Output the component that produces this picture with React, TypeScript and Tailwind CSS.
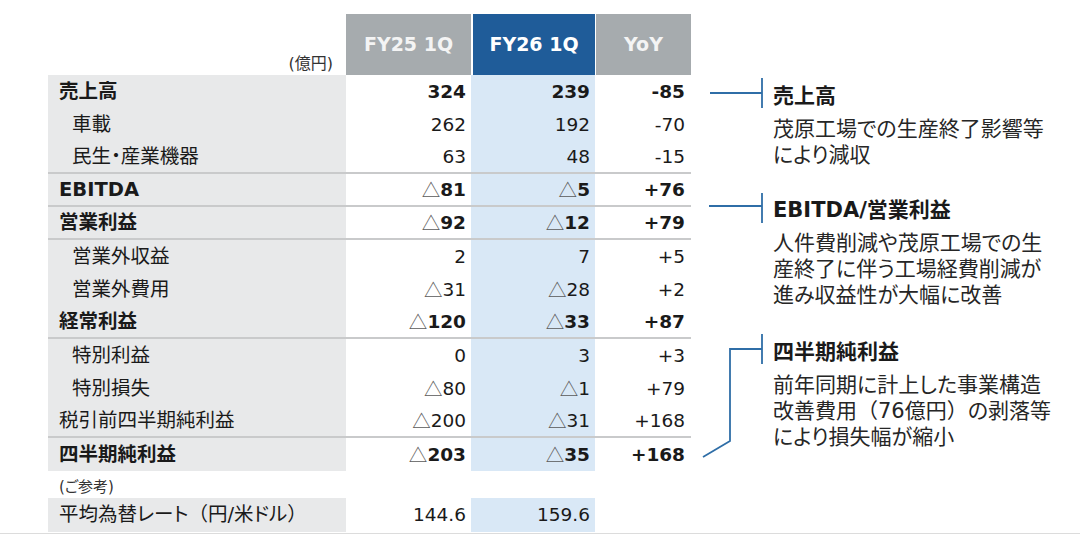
import React from "react";

type Row = {
  label: string;
  fy25: string;
  fy26: string;
  yoy: string;
  bold?: boolean;
  indent?: boolean;
  line?: boolean;
};

const rows: Row[] = [
  { label: "売上高", fy25: "324", fy26: "239", yoy: "-85", bold: true },
  { label: "車載", fy25: "262", fy26: "192", yoy: "-70", indent: true },
  { label: "民生・産業機器", fy25: "63", fy26: "48", yoy: "-15", indent: true, line: true },
  { label: "EBITDA", fy25: "△81", fy26: "△5", yoy: "+76", bold: true, line: true },
  { label: "営業利益", fy25: "△92", fy26: "△12", yoy: "+79", bold: true, line: true },
  { label: "営業外収益", fy25: "2", fy26: "7", yoy: "+5", indent: true },
  { label: "営業外費用", fy25: "△31", fy26: "△28", yoy: "+2", indent: true },
  { label: "経常利益", fy25: "△120", fy26: "△33", yoy: "+87", bold: true, line: true },
  { label: "特別利益", fy25: "0", fy26: "3", yoy: "+3", indent: true },
  { label: "特別損失", fy25: "△80", fy26: "△1", yoy: "+79", indent: true },
  { label: "税引前四半期純利益", fy25: "△200", fy26: "△31", yoy: "+168", line: true },
  { label: "四半期純利益", fy25: "△203", fy26: "△35", yoy: "+168", bold: true },
];

const latin = "font-['DejaVu_Sans','Noto_Sans_CJK_JP',sans-serif]";

// full-width bracket without proportional spacing
const Paren = ({ c }: { c: string }) => <span className="[font-feature-settings:normal]">{c}</span>;

// △ is drawn thin and grey even on bold rows
const Num = ({ value }: { value: string }) => {
  if (!value.startsWith("△")) return <>{value}</>;
  return (
    <>
      <span className="font-normal text-[#5a5a5a] font-['Noto_Sans_CJK_JP',sans-serif]">△</span>
      {value.slice(1)}
    </>
  );
};

const Note = ({ title, lines, className }: { title: string; lines: React.ReactNode[]; className: string }) => (
  <div className={className}>
    <div className="text-[21px] leading-[30px] font-bold text-[#1a1a1a]">{title}</div>
    <div className="mt-[5px] text-[21px] leading-[26px] text-[#262626]">
      {lines.map((l, i) => (
        <div key={i}>{l}</div>
      ))}
    </div>
  </div>
);

export default function App() {
  return (
    <div
      className={`relative w-[1080px] h-[543px] overflow-hidden bg-white text-[#1a1a1a] ${latin} [font-feature-settings:'palt']`}
    >
      <div className="flex h-[534px] border-b border-[#dcdcdc]">
        {/* table */}
        <div className="ml-[48px] pt-[14px] w-[643px]">
          <div className="grid grid-cols-[298px_125px_124px_96px] h-[61px]">
            <div className="flex items-end justify-end pr-[13px] pb-[1px] text-[16px] leading-[20px] text-[#333]">
              (億円)
            </div>
            <div className="flex items-center justify-center bg-[#a6abae] text-[19px] font-bold text-[#f4f4f4]">
              FY25 1Q
            </div>
            <div className="flex items-center justify-center bg-[#1f5c99] border-l-2 border-white text-[19px] font-bold text-white">
              FY26 1Q
            </div>
            <div className="flex items-center justify-center bg-[#a6abae] border-l border-white text-[19px] font-bold text-[#f4f4f4]">
              YoY
            </div>
          </div>

          {rows.map((r) => (
            <div
              key={r.label}
              className={`grid grid-cols-[298px_125px_124px_96px] h-[33px] box-border ${
                r.line ? "border-b-2 border-[#c9cacb]" : ""
              } ${r.bold ? "font-bold" : ""}`}
            >
              <div
                className={`flex items-center bg-[#e8e9ea] text-[19.5px] ${
                  r.indent ? "pl-[24px]" : "pl-[11px]"
                }`}
              >
                {r.label}
              </div>
              <div className="flex items-center justify-end pr-[5px] text-[18.5px]">
                <Num value={r.fy25} />
              </div>
              <div className="flex items-center justify-end pr-[5px] bg-[#d9e8f6] text-[18.5px]">
                <Num value={r.fy26} />
              </div>
              <div className="flex items-center justify-end pr-[6px] text-[18.5px]">
                <Num value={r.yoy} />
              </div>
            </div>
          ))}

          <div className="h-[27px] flex items-end pl-[11px] pb-[1px] text-[15px] leading-[20px] text-[#333]">
            (ご参考)
          </div>
          <div className="grid grid-cols-[298px_125px_124px_96px] h-[34px]">
            <div className="flex items-center pl-[11px] bg-[#e8e9ea] text-[19.5px]">
              平均為替レート<Paren c="（" />円/米ドル<Paren c="）" />
            </div>
            <div className="flex items-center justify-end pr-[5px] text-[18.5px]">144.6</div>
            <div className="flex items-center justify-end pr-[5px] bg-[#d9e8f6] text-[18.5px]">159.6</div>
            <div />
          </div>
        </div>

        {/* notes */}
        <div className="ml-[82px] flex flex-col">
          <Note className="mt-[81px]" title="売上高" lines={["茂原工場での生産終了影響等", "により減収"]} />
          <Note
            className="mt-[27px]"
            title="EBITDA/営業利益"
            lines={["人件費削減や茂原工場での生", "産終了に伴う工場経費削減が", "進み収益性が大幅に改善"]}
          />
          <Note
            className="mt-[29px]"
            title="四半期純利益"
            lines={[
              "前年同期に計上した事業構造",
              <>
                改善費用<Paren c="（" />76億円<Paren c="）" />の剥落等
              </>,
              "により損失幅が縮小",
            ]}
          />
        </div>
      </div>

      <svg className="absolute inset-0 pointer-events-none" width="1080" height="543" fill="none">
        <g stroke="#2f6ea7" strokeWidth="1.8">
          <path d="M710 93H762M762 78V108" />
          <path d="M709 206H762M762 193V223" />
          <path d="M762 334V364M762 349H730V441L703 457" />
        </g>
      </svg>
    </div>
  );
}
